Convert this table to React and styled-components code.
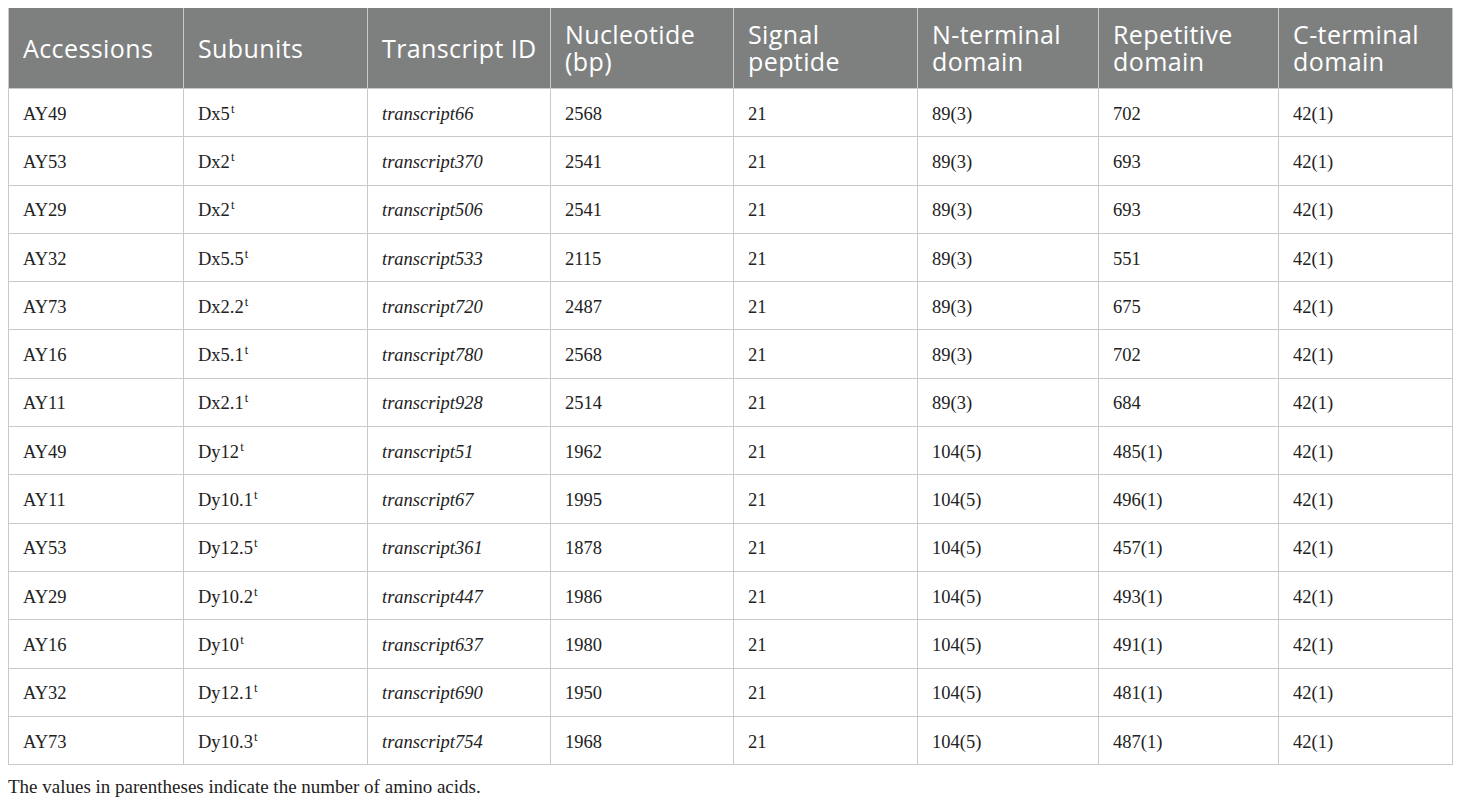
import styled, { createGlobalStyle } from "styled-components";

const GlobalStyle = createGlobalStyle`
  body {
    margin: 0;
    background: #ffffff;
  }
`;

const COLS = [175, 184, 183, 183, 184, 181, 180, 174];

const HEADERS = [
  "Accessions",
  "Subunits",
  "Transcript ID",
  "Nucleotide (bp)",
  "Signal peptide",
  "N-terminal domain",
  "Repetitive domain",
  "C-terminal domain",
];

const ROWS = [
  ["AY49", "Dx5", "transcript66", "2568", "21", "89(3)", "702", "42(1)"],
  ["AY53", "Dx2", "transcript370", "2541", "21", "89(3)", "693", "42(1)"],
  ["AY29", "Dx2", "transcript506", "2541", "21", "89(3)", "693", "42(1)"],
  ["AY32", "Dx5.5", "transcript533", "2115", "21", "89(3)", "551", "42(1)"],
  ["AY73", "Dx2.2", "transcript720", "2487", "21", "89(3)", "675", "42(1)"],
  ["AY16", "Dx5.1", "transcript780", "2568", "21", "89(3)", "702", "42(1)"],
  ["AY11", "Dx2.1", "transcript928", "2514", "21", "89(3)", "684", "42(1)"],
  ["AY49", "Dy12", "transcript51", "1962", "21", "104(5)", "485(1)", "42(1)"],
  ["AY11", "Dy10.1", "transcript67", "1995", "21", "104(5)", "496(1)", "42(1)"],
  ["AY53", "Dy12.5", "transcript361", "1878", "21", "104(5)", "457(1)", "42(1)"],
  ["AY29", "Dy10.2", "transcript447", "1986", "21", "104(5)", "493(1)", "42(1)"],
  ["AY16", "Dy10", "transcript637", "1980", "21", "104(5)", "491(1)", "42(1)"],
  ["AY32", "Dy12.1", "transcript690", "1950", "21", "104(5)", "481(1)", "42(1)"],
  ["AY73", "Dy10.3", "transcript754", "1968", "21", "104(5)", "487(1)", "42(1)"],
];

const Page = styled.div`
  padding: 8px 8px 0 8px;
`;

const Table = styled.table`
  width: 1444px;
  border-collapse: collapse;
  table-layout: fixed;
`;

const HeadCell = styled.th`
  height: 80px;
  padding: 0 6px 0 14px;
  background: #7e8080;
  color: #ffffff;
  font-family: "Open Sans", "Noto Sans", sans-serif;
  font-weight: 400;
  font-size: 25px;
  letter-spacing: 0.4px;
  line-height: 27px;
  text-align: left;
  vertical-align: middle;
  border: 1px solid #c9c9c9;
  border-top: none;
`;

const Cell = styled.td`
  height: 44.3px;
  padding: 3px 14px 0 14px;
  font-family: "Liberation Serif", "Times New Roman", serif;
  font-size: 18.5px;
  font-style: ${(p) => (p.$italic ? "italic" : "normal")};
  color: #222222;
  text-align: left;
  vertical-align: middle;
  border: 1px solid #c9c9c9;
  white-space: nowrap;
`;

const Sup = styled.sup`
  font-size: 12.5px;
  vertical-align: 7px;
  line-height: 0;
  margin-left: 1px;
`;

const Note = styled.p`
  margin: 11px 0 0 0;
  font-family: "Liberation Serif", "Times New Roman", serif;
  font-size: 19px;
  color: #222222;
`;

export default function App() {
  return (
    <Page>
      <GlobalStyle />
      <Table>
        <colgroup>
          {COLS.map((w, i) => (
            <col key={i} style={{ width: w }} />
          ))}
        </colgroup>
        <thead>
          <tr>
            {HEADERS.map((h) => (
              <HeadCell key={h}>{h}</HeadCell>
            ))}
          </tr>
        </thead>
        <tbody>
          {ROWS.map((r, i) => (
            <tr key={i}>
              {r.map((v, j) => (
                <Cell key={j} $italic={j === 2}>
                  {v}
                  {j === 1 && <Sup>t</Sup>}
                </Cell>
              ))}
            </tr>
          ))}
        </tbody>
      </Table>
      <Note>The values in parentheses indicate the number of amino acids.</Note>
    </Page>
  );
}
